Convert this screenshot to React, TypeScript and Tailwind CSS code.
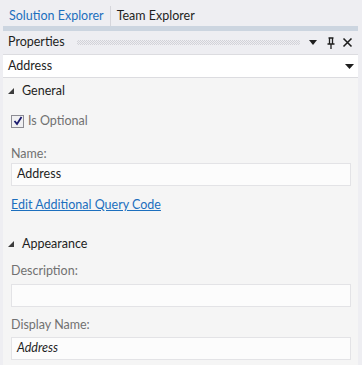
import React from "react";

const font = { fontFamily: 'Lato, "Noto Sans", sans-serif' };

function Tri() {
  return (
    <svg width="7" height="7" viewBox="0 0 7 7" className="shrink-0">
      <polygon points="6,0 6,6 0,6" fill="#3c3c3c" />
    </svg>
  );
}

function Section({ title }: { title: string }) {
  return (
    <div className="flex items-center gap-[7px] pl-[5px] h-[20px] text-[12.5px] text-[#1e1e1e]">
      <Tri />
      <span>{title}</span>
    </div>
  );
}

function Field({ value, italic }: { value?: string; italic?: boolean }) {
  return (
    <div className="ml-[8px] mr-[7px] h-[23px] bg-[#fcfcfc] border border-[#e3e3e6] flex items-center pl-[5px] text-[12.5px] text-[#1e1e1e]">
      <span className={italic ? "italic" : ""}>{value}</span>
    </div>
  );
}

export default function App() {
  return (
    <div className="w-[362px] h-[365px] bg-[#eeeef2] flex flex-col overflow-hidden" style={font}>
      <div className="h-[26px] flex items-end pl-[3px] text-[12.5px]">
        <div className="flex items-center h-[20px]">
          <span className="px-[6px] text-[#1c6fbe] leading-[20px]">Solution Explorer</span>
          <div className="w-px h-[20px] bg-[#d6d6dc]" />
          <span className="px-[6px] text-[#1e1e1e] leading-[20px]">Team Explorer</span>
        </div>
      </div>
      <div className="flex flex-1 min-h-0">
        <div className="w-[3px]" />
        <div className="flex-1 flex flex-col min-w-0">
          <div className="h-[5px] bg-[#ccd5e0]" />
          <div className="h-[23px] flex items-center pl-[5px] pr-[5px] text-[12.5px] text-[#1e1e1e] bg-[#eeeef2]">
            <span>Properties</span>
            <div
              className="flex-1 h-[5px] ml-[12px] mr-[8px]"
              style={{
                backgroundImage:
                  "linear-gradient(45deg, #d2d2d8 25%, transparent 25%, transparent 75%, #d2d2d8 75%), linear-gradient(45deg, #d2d2d8 25%, transparent 25%, transparent 75%, #d2d2d8 75%)",
                backgroundSize: "2px 2px",
                backgroundPosition: "0 0, 1px 1px",
              }}
            />
            <svg width="10" height="6" viewBox="0 0 10 6" className="mr-[8px]">
              <polygon points="1,0 9,0 5,5" fill="#1e1e1e" />
            </svg>
            <svg width="10" height="12" viewBox="0 0 10 12" className="mr-[6px]">
              <path d="M2.5 1h5M3.5 1v6M6.5 1v6M1.5 7h7M5 7v5" stroke="#1e1e1e" strokeWidth="1.3" fill="none" />
            </svg>
            <svg width="11" height="11" viewBox="0 0 11 11">
              <path d="M1.5 1.5l8 8M9.5 1.5l-8 8" stroke="#1e1e1e" strokeWidth="1.6" />
            </svg>
          </div>
          <div className="h-[24px] bg-white border-y border-[#dcdce0] flex items-center pl-[5px] pr-[4px] text-[12.5px] text-[#1e1e1e]">
            <span className="flex-1">Address</span>
            <svg width="9" height="5" viewBox="0 0 9 5">
              <polygon points="0,0 9,0 4.5,5" fill="#1e1e1e" />
            </svg>
          </div>
          <div className="flex-1 bg-[#f5f5f5] flex flex-col">
            <div className="mt-[3px]"><Section title="General" /></div>
            <div className="mt-[11px] flex items-center pl-[8px] gap-[4px] h-[18px]">
              <div className="w-[13px] h-[13px] border border-[#8c8c93] bg-[#f0f0f2] flex items-center justify-center">
                <svg width="10" height="10" viewBox="0 0 10 10">
                  <path d="M1.5 5l2.5 3L8.5 1" stroke="#1a1a6e" strokeWidth="1.8" fill="none" />
                </svg>
              </div>
              <span className="text-[12.5px] text-[#717171]">Is Optional</span>
            </div>
            <div className="mt-[15px] pl-[8px] h-[18px] text-[12.5px] text-[#717171] leading-[18px]">Name:</div>
            <div className="mt-0"><Field value="Address" /></div>
            <div className="mt-[10px] pl-[8px] h-[18px] leading-[18px] text-[12.5px] text-[#1c6fbe] underline">Edit Additional Query Code</div>
            <div className="mt-[20px]"><Section title="Appearance" /></div>
            <div className="mt-[8px] pl-[8px] h-[18px] text-[12.5px] text-[#717171] leading-[18px]">Description:</div>
            <div className="mt-[4px]"><Field /></div>
            <div className="mt-[9px] pl-[8px] h-[18px] text-[12.5px] text-[#717171] leading-[18px]">Display Name:</div>
            <div className="mt-[3px]"><Field value="Address" italic /></div>
          </div>
        </div>
        <div className="w-[4px]" />
      </div>
    </div>
  );
}
